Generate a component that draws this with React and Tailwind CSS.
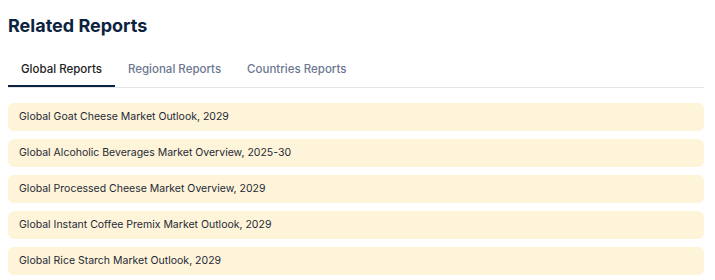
const reports = [
  'Global Goat Cheese Market Outlook, 2029',
  'Global Alcoholic Beverages Market Overview, 2025-30',
  'Global Processed Cheese Market Overview, 2029',
  'Global Instant Coffee Premix Market Outlook, 2029',
  'Global Rice Starch Market Outlook, 2029',
];

const tabs = ['Global Reports', 'Regional Reports', 'Countries Reports'];

export default function App() {
  return (
    <div className="bg-white w-[715px] h-[280px] px-2 pt-[12px] font-[family-name:Inter,sans-serif]">
      {/* Heading */}
      <h2 className="text-[18px] leading-[28px] font-bold text-[#0c2340]">Related Reports</h2>

      {/* Tabs */}
      <div className="mt-[17px] flex border-b border-[#e6e6e6] mr-[3px]">
        {tabs.map((t, i) => (
          <div
            key={t}
            className={
              i === 0
                ? 'px-[13px] pt-[4px] pb-[8px] text-[11.5px] leading-[16px] font-medium text-[#222] border-b-2 border-[#0c2340]'
                : 'px-[13px] pt-[4px] pb-[10px] text-[11.5px] leading-[16px] font-medium text-[#6b7790]'
            }
          >
            {t}
          </div>
        ))}
      </div>

      {/* Report list */}
      <div className="mt-[15px] flex flex-col gap-2 mr-[3px]">
        {reports.map((r) => (
          <div key={r} className="h-[28px] flex items-center px-[11px] rounded-md bg-[#fef4d9] text-[10.5px] text-[#1f2937]">
            {r}
          </div>
        ))}
      </div>
    </div>
  );
}
